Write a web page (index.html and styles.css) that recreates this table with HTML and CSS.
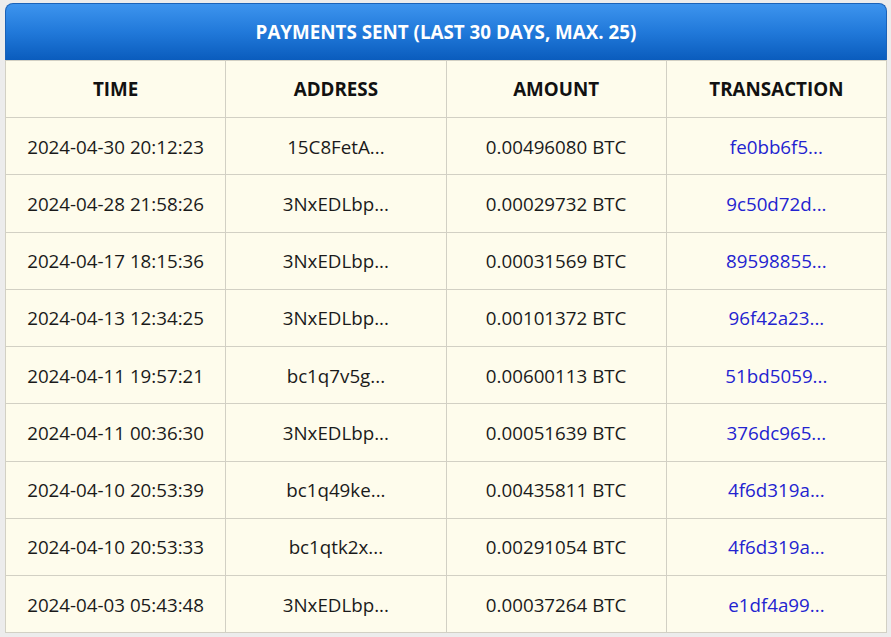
FILE: index.html
```html
<!DOCTYPE html>
<html>
<head>
<meta charset="utf-8">
<link rel="stylesheet" href="styles.css">
</head>
<body>
<div class="wrap">
  <div class="panel">
    <div class="title">PAYMENTS SENT (LAST 30 DAYS, MAX. 25)</div>
    <table class="grid">
      <thead>
        <tr><th>TIME</th><th>ADDRESS</th><th>AMOUNT</th><th>TRANSACTION</th></tr>
      </thead>
      <tbody>
        <tr><td>2024-04-30 20:12:23</td><td>15C8FetA...</td><td>0.00496080 BTC</td><td><a href="#">fe0bb6f5...</a></td></tr>
        <tr><td>2024-04-28 21:58:26</td><td>3NxEDLbp...</td><td>0.00029732 BTC</td><td><a href="#">9c50d72d...</a></td></tr>
        <tr><td>2024-04-17 18:15:36</td><td>3NxEDLbp...</td><td>0.00031569 BTC</td><td><a href="#">89598855...</a></td></tr>
        <tr><td>2024-04-13 12:34:25</td><td>3NxEDLbp...</td><td>0.00101372 BTC</td><td><a href="#">96f42a23...</a></td></tr>
        <tr><td>2024-04-11 19:57:21</td><td>bc1q7v5g...</td><td>0.00600113 BTC</td><td><a href="#">51bd5059...</a></td></tr>
        <tr><td>2024-04-11 00:36:30</td><td>3NxEDLbp...</td><td>0.00051639 BTC</td><td><a href="#">376dc965...</a></td></tr>
        <tr><td>2024-04-10 20:53:39</td><td>bc1q49ke...</td><td>0.00435811 BTC</td><td><a href="#">4f6d319a...</a></td></tr>
        <tr><td>2024-04-10 20:53:33</td><td>bc1qtk2x...</td><td>0.00291054 BTC</td><td><a href="#">4f6d319a...</a></td></tr>
        <tr><td>2024-04-03 05:43:48</td><td>3NxEDLbp...</td><td>0.00037264 BTC</td><td><a href="#">e1df4a99...</a></td></tr>
      </tbody>
    </table>
  </div>
</div>
</body>
</html>
```

FILE: styles.css
```css
html, body {
  margin: 0;
  padding: 0;
  background: #ececec;
}
.wrap {
  padding: 3px 4px 4px 5px;
}
.panel {
  width: 882px;
  font-family: "Open Sans", "Liberation Sans", sans-serif;
}
.title {
  height: 57px;
  line-height: 57px;
  text-align: center;
  color: #fff;
  font-weight: 700;
  font-size: 18.8px;
  background: linear-gradient(to bottom, #3d94ee 0%, #2179da 50%, #0a5cbd 100%);
  border-radius: 8px 8px 0 0;
  border: 1px solid #1a62b8;
  border-bottom: none;
  box-sizing: border-box;
}
.grid {
  width: 882px;
  border-collapse: collapse;
  table-layout: fixed;
  background: #fefcec;
}
.grid th, .grid td {
  border: 1px solid #d2d0c4;
  text-align: center;
  padding: 0;
  color: #1a1a1a;
}
.grid td {
  height: 56.25px;
  font-size: 18.75px;
}
.grid th {
  height: 56px;
  font-size: 18.8px;
  font-weight: 700;
  color: #111;
}
.grid a {
  color: #2323d0;
  text-decoration: none;
}
```
